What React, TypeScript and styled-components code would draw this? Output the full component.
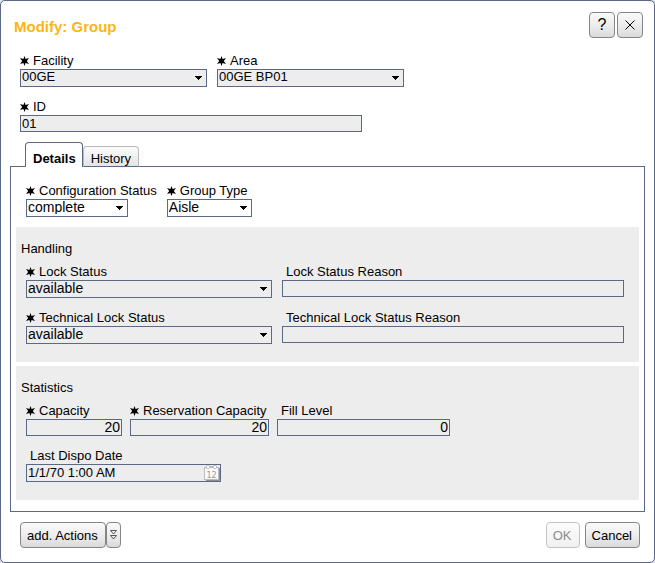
import React, { useId, useState } from "react";
import styled, { createGlobalStyle, css } from "styled-components";

const line = "#5b6987";
const shade = "#ededed";

const GlobalStyle = createGlobalStyle`
  *, *::before, *::after { box-sizing: border-box; }
  body {
    margin: 0;
    background: #dcdfe6;
    color: #000;
    font: 13px/16px "Liberation Sans", Arial, sans-serif;
  }
  button, input, select { font-family: inherit; color: inherit; }
`;

const Dialog = styled.main`
  display: flex;
  flex-direction: column;
  min-height: 100vh;
  padding: 11px 0 14px;
  border: 1px solid ${line};
  border-radius: 5px;
  background: #fff;
`;

const Header = styled.header`
  display: flex;
  align-items: center;
  justify-content: space-between;
  padding: 0 11px 0 13px;
  margin-bottom: 15px;
`;

const Title = styled.h1`
  margin: 0;
  padding-top: 4px;
  font-size: 15px;
  line-height: 18px;
  color: #fbb615;
`;

const ButtonGroup = styled.div<{ $gap?: number }>`
  display: flex;
  gap: ${(p) => p.$gap ?? 0}px;
`;

const Button = styled.button<{ $square?: boolean; $narrow?: boolean }>`
  display: inline-flex;
  align-items: center;
  justify-content: center;
  height: 26px;
  padding: ${(p) => (p.$square || p.$narrow ? "0" : "1px 7px 0 6px")};
  ${(p) => p.$square && "width: 26px;"}
  ${(p) => p.$narrow && "width: 15px;"}
  border: 1px solid #858585;
  border-radius: 4px;
  background: linear-gradient(#fafafa, #ededed 50%, #dadada);
  font-size: 13px;
  line-height: 16px;
  white-space: nowrap;

  &:disabled {
    border-color: #c3c3c3;
    background: linear-gradient(#fdfdfd, #f0f0f0);
    color: #8c8c8c;
  }
`;

const HelpMark = styled.span`
  font-size: 16px;
`;

const TopForm = styled.div`
  display: flex;
  flex-direction: column;
  gap: 12px;
  padding: 0 19px;
`;

const Row = styled.div<{ $gap?: number; $inset?: boolean }>`
  display: flex;
  align-items: flex-start;
  gap: ${(p) => p.$gap ?? 10}px;
  ${(p) => p.$inset && "padding-left: 10px;"}
`;

const FieldBox = styled.div<{ $width?: number; $grow?: boolean }>`
  display: flex;
  flex-direction: column;
  min-width: 0;
  ${(p) => p.$width && `flex: 0 1 ${p.$width}px;`}
  ${(p) => p.$grow && "flex: 1 1 0;"}
`;

const Label = styled.label<{ $plain?: boolean }>`
  display: flex;
  align-items: center;
  gap: 4px;
  height: 16px;
  padding-left: ${(p) => (p.$plain ? 4 : 0)}px;
  white-space: nowrap;
`;

const controlStyle = css<{ $filled?: boolean; $large?: boolean }>`
  display: block;
  width: 100%;
  margin: 0;
  border: 1px solid ${line};
  border-radius: 0;
  background: ${(p) => (p.$filled ? shade : "transparent")};
  font-size: ${(p) => (p.$large ? 14 : 13)}px;
  line-height: 14px;
  outline-offset: -1px;
`;

const TextInput = styled.input<{ $filled?: boolean; $large?: boolean; $end?: boolean }>`
  ${controlStyle}
  height: 17px;
  padding: 0 1px 1px;
  text-align: ${(p) => (p.$end ? "right" : "left")};
`;

const DateInput = styled(TextInput)`
  height: 18px;
  padding: 0 20px 2px 1px;
`;

const Select = styled.select<{ $filled?: boolean; $large?: boolean }>`
  ${controlStyle}
  height: 18px;
  padding: 0 16px 2px 1px;
  appearance: none;
`;

const Stack = styled.div<{ $width?: number }>`
  display: grid;
  align-items: center;
  ${(p) => p.$width && `width: ${p.$width}px;`}
  max-width: 100%;

  > * { grid-area: 1 / 1; }
`;

const ArrowSvg = styled.svg`
  justify-self: end;
  margin-right: 5px;
  pointer-events: none;
`;

const IconButton = styled.button`
  display: flex;
  justify-self: end;
  margin-right: 1px;
  padding: 0;
  border: 0;
  background: none;
`;

const Tabs = styled.div`
  display: flex;
  align-items: flex-end;
  margin: 10px 24px -1px;
  height: 25px;
`;

const Tab = styled.button<{ $active: boolean }>`
  position: relative;
  height: ${(p) => (p.$active ? 25 : 21)}px;
  padding: ${(p) => (p.$active ? "8px 6px 0 7px" : "4px 7px 0")};
  border: 1px solid ${(p) => (p.$active ? line : "#b9b9b9")};
  border-bottom: ${(p) => (p.$active ? "0" : `1px solid ${line}`)};
  border-radius: 4px 4px 0 0;
  background: ${(p) => (p.$active ? "#fff" : "linear-gradient(#fcfcfc, #e4e4e4)")};
  font-size: 13px;
  line-height: 16px;
  font-weight: ${(p) => (p.$active ? "bold" : "normal")};
`;

const Panel = styled.section`
  flex: 1 0 auto;
  margin: 0 9px;
  padding: 16px 5px 11px;
  border: 1px solid ${line};
`;

const Section = styled.section`
  display: flex;
  flex-direction: column;
  gap: 12px;
  margin-top: 10px;
  padding: 14px 15px 18px 10px;
  background: ${shade};

  & + & { margin-top: 4px; }
`;

const SectionTitle = styled.h2`
  margin: 0 0 -5px -5px;
  font-size: 13px;
  line-height: 16px;
  font-weight: normal;
`;

const Footer = styled.footer`
  display: flex;
  justify-content: space-between;
  padding: 0 14px 0 19px;
  margin-top: 10px;
`;

const Star = () => (
  <svg width="9" height="10" viewBox="0 0 9 10" aria-label="required">
    <path d="M4.5 0 5.6 3 9 2 6.8 5 9 8 5.6 7 4.5 10 3.4 7 0 8 2.2 5 0 2 3.4 3Z" />
  </svg>
);

const CalendarIcon = () => (
  <svg width="16" height="16" viewBox="0 0 16 16">
    <path d="M15.5 3v12.5H2" fill="none" stroke="#8f8f8f" />
    <rect x="0.5" y="2.5" width="14" height="12" fill="#fafafa" stroke="#bcbcbc" />
    <path d="M5.5 1.5h4" stroke="#b5b5b5" />
    <rect x="2.5" y="0.5" width="3" height="3" rx="1" fill="#fff" stroke="#b5b5b5" />
    <rect x="9.5" y="0.5" width="3" height="3" rx="1" fill="#fff" stroke="#b5b5b5" />
    <text x="7.5" y="13" textAnchor="middle" fontSize="8" fontFamily="DejaVu Sans, sans-serif" fill="#999">12</text>
  </svg>
);

type FieldProps = {
  label: string;
  value?: string;
  required?: boolean;
  kind?: "text" | "select" | "date";
  width?: number;
  controlWidth?: number;
  grow?: boolean;
  filled?: boolean;
  large?: boolean;
  end?: boolean;
};

function Field({ label, value = "", required, kind = "text", width, controlWidth, grow, filled, large, end }: FieldProps) {
  const id = useId();
  return (
    <FieldBox $width={width} $grow={grow}>
      <Label htmlFor={id} $plain={!required}>
        {required && <Star />}
        {label}
      </Label>
      {kind === "text" && <TextInput id={id} defaultValue={value} $filled={filled} $large={large} $end={end} />}
      {kind === "select" && (
        <Stack $width={controlWidth}>
          <Select id={id} $filled={filled} $large={large}>
            <option>{value}</option>
          </Select>
          <ArrowSvg width="7" height="4" viewBox="0 0 7 4" aria-hidden="true" shapeRendering="crispEdges">
            <path d="M0 0h7v1H6v1H5v1H4v1H3V3H2V2H1V1H0Z" />
          </ArrowSvg>
        </Stack>
      )}
      {kind === "date" && (
        <Stack>
          <DateInput id={id} defaultValue={value} />
          <IconButton type="button" aria-label="Choose date">
            <CalendarIcon />
          </IconButton>
        </Stack>
      )}
    </FieldBox>
  );
}

function Details() {
  return (
    <>
      <Row $inset>
        <Field label="Configuration Status" value="complete" kind="select" required large controlWidth={102} />
        <Field label="Group Type" value="Aisle" kind="select" required large controlWidth={85} />
      </Row>
      <Section>
        <SectionTitle>Handling</SectionTitle>
        <Row>
          <Field label="Lock Status" value="available" kind="select" required large width={246} />
          <Field label="Lock Status Reason" grow />
        </Row>
        <Row>
          <Field label="Technical Lock Status" value="available" kind="select" required large width={246} />
          <Field label="Technical Lock Status Reason" grow />
        </Row>
      </Section>
      <Section>
        <SectionTitle>Statistics</SectionTitle>
        <Row $gap={8}>
          <Field label="Capacity" value="20" required large end width={96} />
          <Field label="Reservation Capacity" value="20" required large end width={139} />
          <Field label="Fill Level" value="0" large end width={173} />
        </Row>
        <Row>
          <Field label="Last Dispo Date" value="1/1/70 1:00 AM" kind="date" width={195} />
        </Row>
      </Section>
    </>
  );
}

export default function App() {
  const [tab, setTab] = useState("Details");
  return (
    <>
      <GlobalStyle />
      <Dialog>
        <Header>
          <Title>Modify: Group</Title>
          <ButtonGroup $gap={2}>
            <Button type="button" $square aria-label="Help">
              <HelpMark>?</HelpMark>
            </Button>
            <Button type="button" $square aria-label="Close">
              <svg width="10" height="10" viewBox="0 0 10 10" aria-hidden="true">
                <path d="M0.5 0.5 9.5 9.5M9.5 0.5 0.5 9.5" stroke="#000" />
              </svg>
            </Button>
          </ButtonGroup>
        </Header>
        <TopForm>
          <Row>
            <Field label="Facility" value="00GE" kind="select" required filled width={187} />
            <Field label="Area" value="00GE BP01" kind="select" required filled width={187} />
          </Row>
          <Row>
            <Field label="ID" value="01" required filled width={342} />
          </Row>
        </TopForm>
        <Tabs role="tablist">
          {["Details", "History"].map((name) => (
            <Tab key={name} type="button" role="tab" aria-selected={tab === name} $active={tab === name} onClick={() => setTab(name)}>
              {name}
            </Tab>
          ))}
        </Tabs>
        <Panel role="tabpanel" aria-label={tab}>{tab === "Details" && <Details />}</Panel>
        <Footer>
          <ButtonGroup>
            <Button type="button">add. Actions</Button>
            <Button type="button" $narrow aria-label="More actions">
              <svg width="7" height="10" viewBox="0 0 7 10" fill="none" stroke="#333" aria-hidden="true">
                <path d="M0.5 0.5h6L3.5 4ZM0.5 5.5h6L3.5 9Z" strokeWidth="0.8" />
              </svg>
            </Button>
          </ButtonGroup>
          <ButtonGroup $gap={5}>
            <Button type="button" disabled>OK</Button>
            <Button type="button">Cancel</Button>
          </ButtonGroup>
        </Footer>
      </Dialog>
    </>
  );
}
